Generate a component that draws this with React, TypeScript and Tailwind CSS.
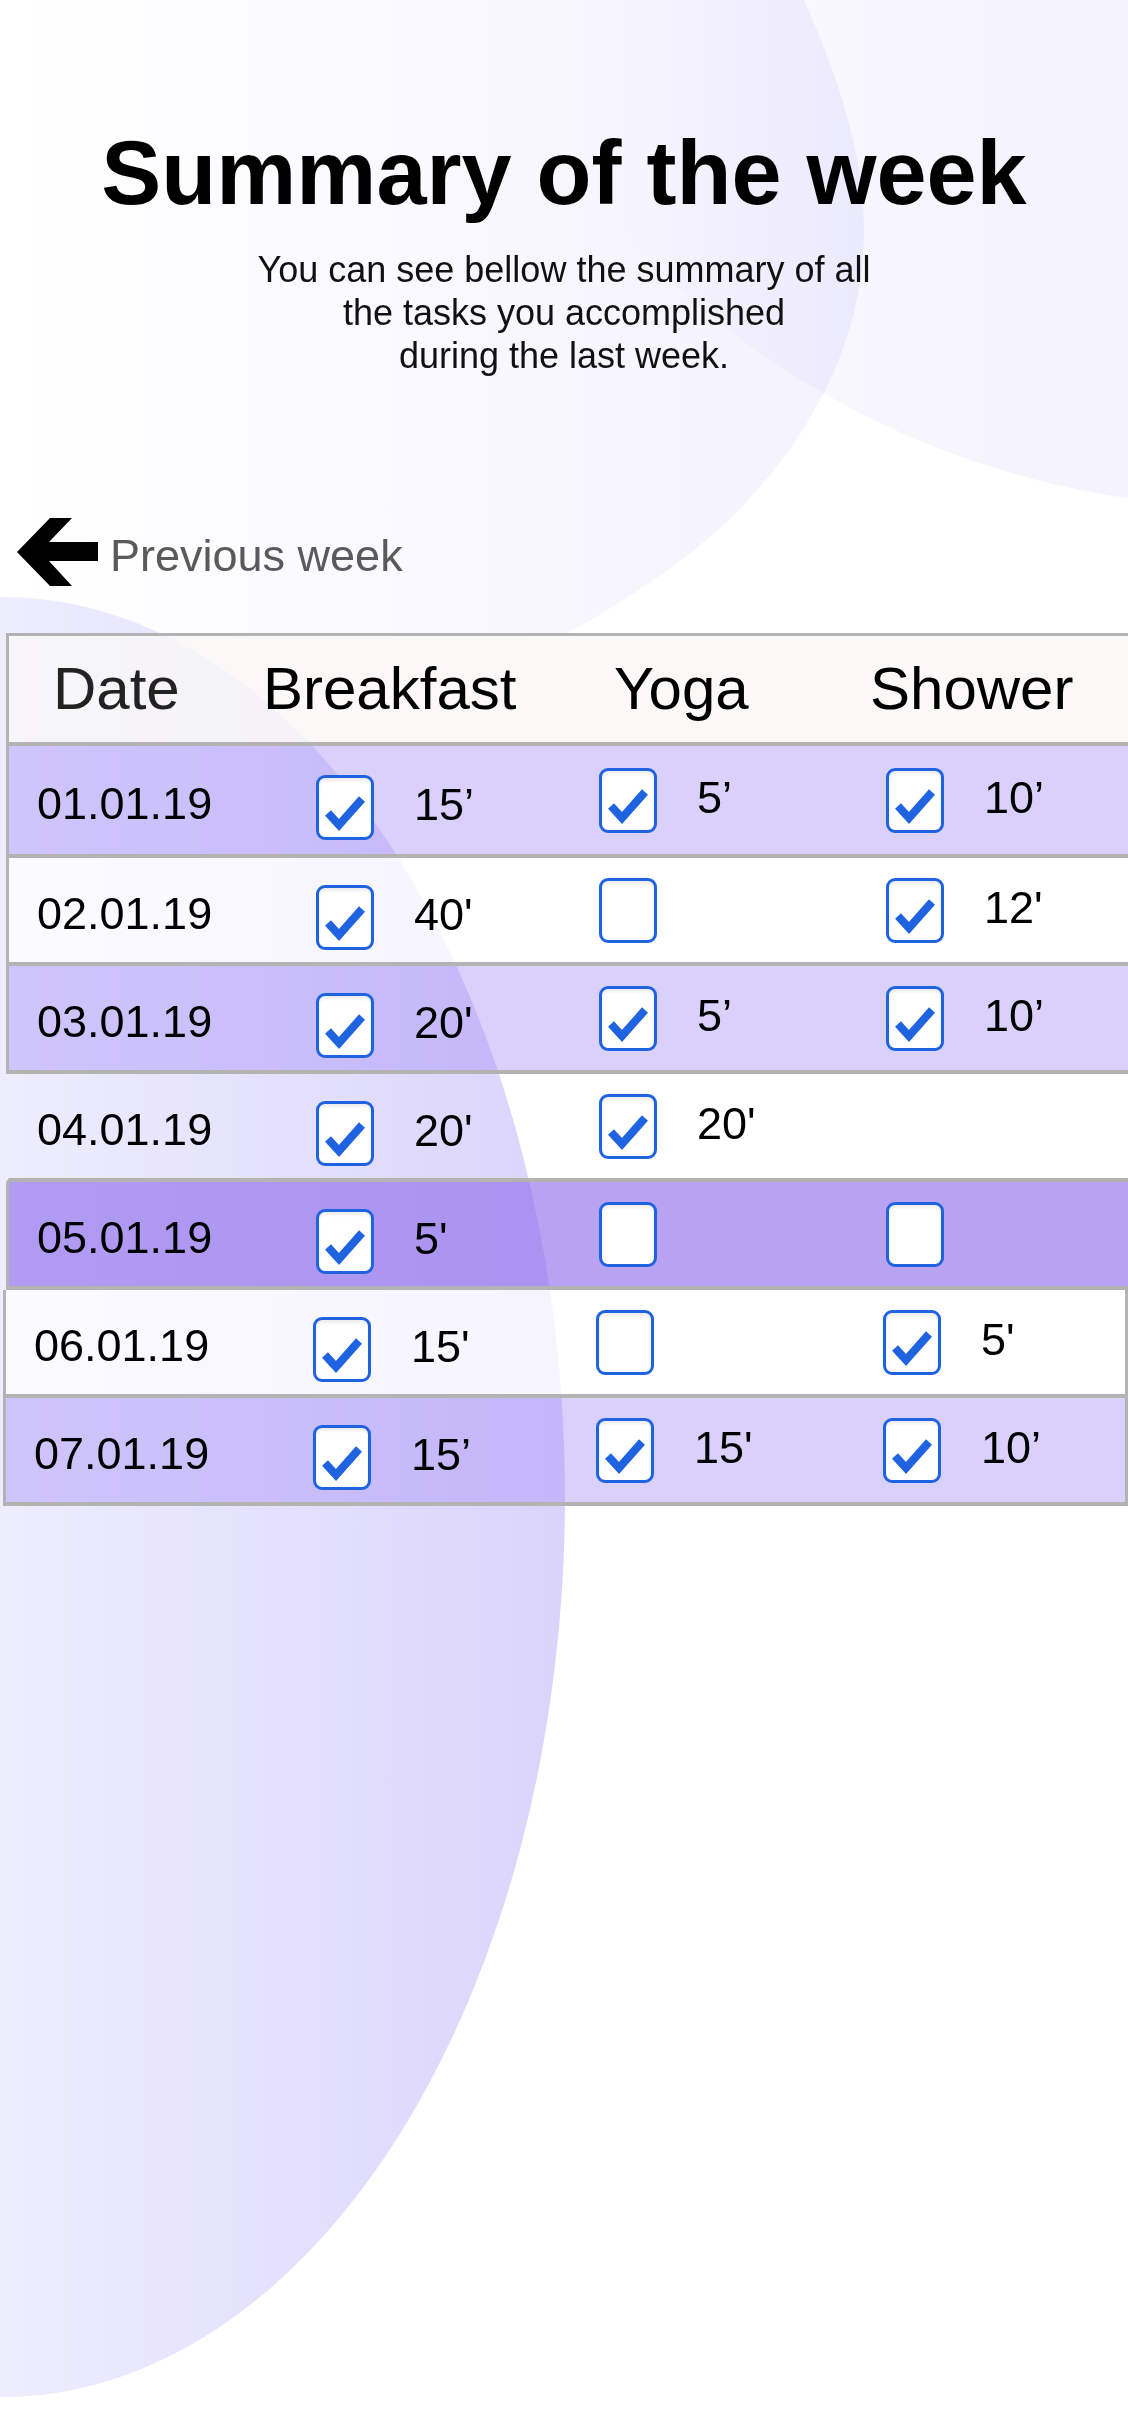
import React from "react";

type Cell = { done: boolean; time?: string } | null;
type Row = {
	date: string;
	tone: "lav" | "deep" | "white" | "clear";
	shift?: boolean;
	tall?: boolean;
	cells: [Cell, Cell, Cell];
};

const rows: Row[] = [
	{date: "01.01.19", tone: "lav", tall: true, cells: [{done: true, time: "15’"}, {done: true, time: "5’"}, {done: true, time: "10’"}]},
	{date: "02.01.19", tone: "white", cells: [{done: true, time: "40'"}, {done: false}, {done: true, time: "12'"}]},
	{date: "03.01.19", tone: "lav", cells: [{done: true, time: "20'"}, {done: true, time: "5’"}, {done: true, time: "10’"}]},
	{date: "04.01.19", tone: "clear", cells: [{done: true, time: "20'"}, {done: true, time: "20'"}, null]},
	{date: "05.01.19", tone: "deep", cells: [{done: true, time: "5'"}, {done: false}, {done: false}]},
	{date: "06.01.19", tone: "white", shift: true, cells: [{done: true, time: "15'"}, {done: false}, {done: true, time: "5'"}]},
	{date: "07.01.19", tone: "lav", shift: true, cells: [{done: true, time: "15’"}, {done: true, time: "15'"}, {done: true, time: "10’"}]},
];

const toneClass = {
	lav: "bg-[rgba(162,140,248,0.41)]",
	deep: "bg-[rgba(142,107,234,0.63)]",
	white: "bg-white/75",
	clear: "",
};

const Check = ({done}: {done: boolean}) => (
	<div className="h-[65px] w-[58px] shrink-0 rounded-[9px] border-[3px] border-[#1f63e0] bg-white shadow-[inset_0_3px_3px_rgba(0,0,0,0.07)]">
		{done && (
			<svg viewBox="0 0 52 59" className="h-full w-full">
				<polyline points="9,35 20,47 43,21" fill="none" stroke="#1f63e0" strokeWidth="8" strokeLinejoin="miter"/>
			</svg>
		)}
	</div>
);

const TaskCell = ({cell, first}: {cell: Cell; first?: boolean}) => {
	if (!cell) return <div/>;
	return (
		<div className={`flex items-center gap-[40px] ${first ? "pt-[14px]" : ""}`}>
			<Check done={cell.done}/>
			{cell.time && <span className="mb-[6px] text-[45px] leading-none text-black">{cell.time}</span>}
		</div>
	);
};

const BackArrow = () => (
	<svg width="82" height="68" viewBox="0 0 82 68" className="shrink-0">
		<polygon points="1,34 34,0 56,0 33,24 82,24 82,43 33,43 56,68 34,68" fill="#000"/>
	</svg>
);

const TopShape = () => (
	<svg width="1128" height="640" viewBox="0 0 1128 640" className="pointer-events-none absolute left-0 top-0 mix-blend-multiply">
		<defs>
			<linearGradient id="topFade" gradientUnits="userSpaceOnUse" x1="24" y1="0" x2="864" y2="0">
				<stop offset="0" stopColor="#ffffff"/>
				<stop offset="1" stopColor="#f3f2fe"/>
			</linearGradient>
		</defs>
		<path d="M0 0 L804 0 C835 70 864 150 864 230 C864 330 820 430 729 520 C680 565 620 605 567 633 L0 633 Z" fill="url(#topFade)"/>
	</svg>
);

const App = () => {
	return (
		<div className="relative h-[2436px] w-full overflow-hidden bg-white font-['Liberation_Sans',Arial,sans-serif] text-black">
			{/* background shapes */}
			<div className="pointer-events-none absolute left-[393px] top-[-1207px] h-[1714px] w-[1714px] rounded-full bg-[linear-gradient(to_right,rgba(246,245,254,0)_12%,#f7f6fe_28%,#f4f3fe_45%)]"/>
			<TopShape/>
			<div className="pointer-events-none absolute left-[-561px] top-[597px] h-[1800px] w-[1126px] rounded-[50%] bg-[linear-gradient(to_right,#eeedfe_50%,#dad4fc)]"/>

			<div className="relative">
				<h1 className="pt-[128px] text-center text-[90px] font-bold leading-none">Summary of the week</h1>
				<p className="mt-[30px] text-center text-[36px] leading-[43px] text-[#111]">
					You can see bellow the summary of all<br/>
					the tasks you accomplished<br/>
					during the last week.
				</p>

				<div className="mt-[141px] flex items-center gap-[12px] pl-[16px]">
					<BackArrow/>
					<span className="mt-[6px] text-[45px] leading-none text-[#5a5a5a]">Previous week</span>
				</div>

				<div className="mt-[47px]">
					<div className="ml-[6px] flex h-[113px] items-center border-l-[3px] border-t-[3px] border-b-4 border-[#b3b3b3] bg-[rgba(249,248,246,0.8)] text-[60px] leading-none">
						<div className="w-[254px] pl-[44px] text-[#222]">Date</div>
						<div className="w-[351px]">Breakfast</div>
						<div className="w-[256px]">Yoga</div>
						<div>Shower</div>
					</div>

					{rows.map((row) => (
						<div
							key={row.date}
							className={`grid grid-cols-[307px_283px_287px_1fr] items-center border-b-4 border-l-[3px] border-[#b3b3b3] ${row.tall ? "h-[112px]" : "h-[108px]"} ${toneClass[row.tone]} ${row.shift ? "ml-[3px] border-r-[3px]" : "ml-[6px]"} ${row.tone === "clear" ? "border-l-transparent" : ""}`}
						>
							<div className="pl-[28px] pt-[6px] text-[45px] leading-none">{row.date}</div>
							<TaskCell cell={row.cells[0]} first/>
							<TaskCell cell={row.cells[1]}/>
							<TaskCell cell={row.cells[2]}/>
						</div>
					))}
				</div>
			</div>
		</div>
	);
};

export default App;
